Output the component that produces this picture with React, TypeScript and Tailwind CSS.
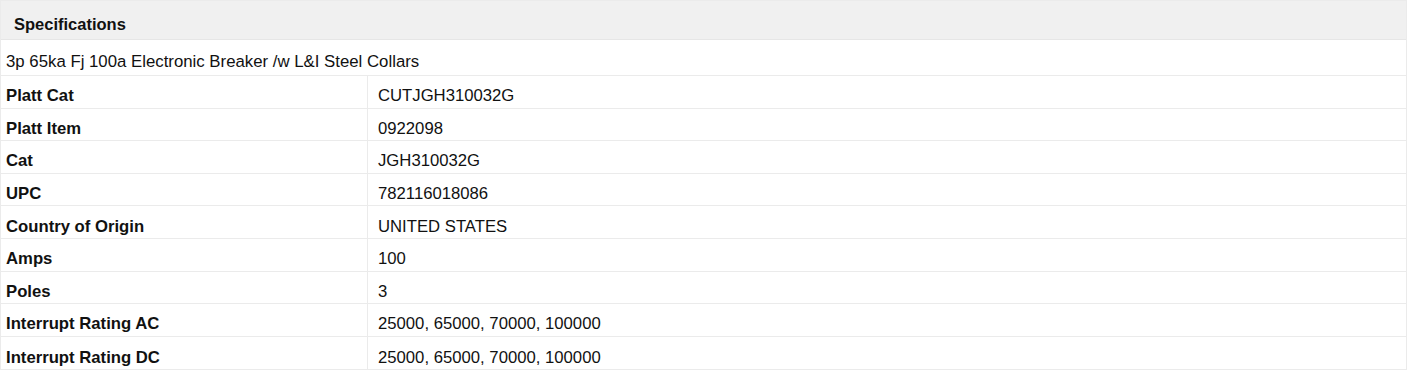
const specs: [string, string][] = [
  ["Platt Cat", "CUTJGH310032G"],
  ["Platt Item", "0922098"],
  ["Cat", "JGH310032G"],
  ["UPC", "782116018086"],
  ["Country of Origin", "UNITED STATES"],
  ["Amps", "100"],
  ["Poles", "3"],
  ["Interrupt Rating AC", "25000, 65000, 70000, 100000"],
  ["Interrupt Rating DC", "25000, 65000, 70000, 100000"],
];

export default function App() {
  return (
    <div className="w-[1408px] h-[377px] bg-white font-['Liberation_Sans',Arial,sans-serif] text-[#111] leading-[19px]">
      <div className="w-[1407px] border border-[#ebebeb]">
        <div className="h-[39px] bg-[#f0f0f0] border-b border-[#e6e6e6] flex items-center pt-[9px] px-[13px] text-[16.5px] font-bold">
          Specifications
        </div>
        <div className="h-[36px] flex items-center pt-[8px] px-[5px] text-[16.8px] border-b border-[#ebebeb]">
          3p 65ka Fj 100a Electronic Breaker /w L&amp;I Steel Collars
        </div>
        {specs.map(([label, value], i) => (
          <div
            key={label}
            className={
              "grid grid-cols-[367px_1fr] h-[32.6px] text-[16.7px]" +
              (i < specs.length - 1 ? " border-b border-[#ebebeb]" : "")
            }
          >
            <div className="flex items-center pt-[8px] px-[5px] font-bold border-r border-[#ebebeb]">{label}</div>
            <div className="flex items-center pt-[8px] px-[10px]">{value}</div>
          </div>
        ))}
      </div>
    </div>
  );
}
